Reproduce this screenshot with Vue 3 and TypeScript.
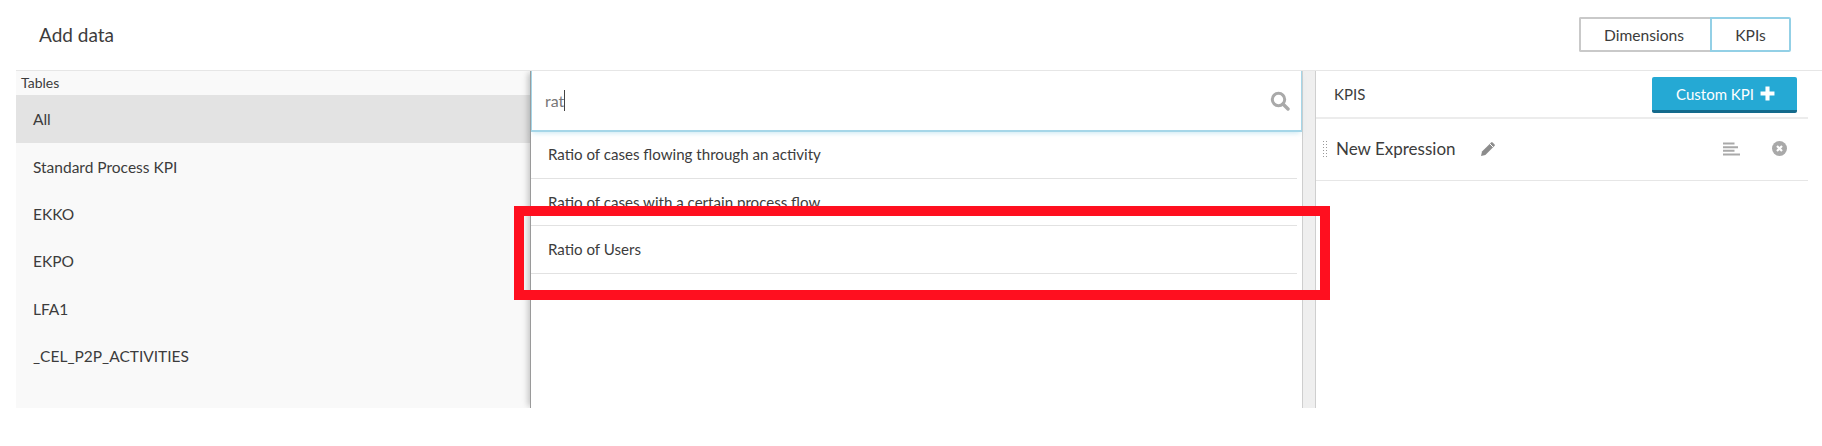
<script setup lang="ts">
const tables: string[] = ['All', 'Standard Process KPI', 'EKKO', 'EKPO', 'LFA1', '_CEL_P2P_ACTIVITIES']
const results: string[] = [
  'Ratio of cases flowing through an activity',
  'Ratio of cases with a certain process flow',
  'Ratio of Users',
]
</script>

<template>
  <div class="page">
    <header class="top">
      <h1 class="title">Add data</h1>
      <div class="toggle">
        <span class="tog tog-a">Dimensions</span>
        <span class="tog tog-b">KPIs</span>
      </div>
    </header>
    <main class="body">
      <section class="left">
        <div class="left-label">Tables</div>
        <div v-for="(t, i) in tables" :key="t" class="table-row" :class="{ active: i === 0 }">{{ t }}</div>
      </section>
      <section class="mid">
        <div class="search">
          <span class="query">rat</span><span class="caret"></span>
          <svg class="search-icon" viewBox="0 0 20 20" width="20" height="20">
            <circle cx="8.5" cy="8.5" r="6.2" fill="none" stroke="#a9a9a9" stroke-width="3" />
            <path d="M13 13l5 5" stroke="#a9a9a9" stroke-width="3.4" stroke-linecap="round" />
          </svg>
        </div>
        <div class="results">
          <div v-for="r in results" :key="r" class="result">{{ r }}</div>
        </div>
      </section>
      <div class="split"></div>
      <section class="right">
        <div class="right-head">
          <span class="kpis">KPIS</span>
          <button class="custom">Custom KPI
            <svg viewBox="0 0 14 14" width="15" height="15">
              <path d="M7 0.5v13M0.5 7h13" stroke="#fff" stroke-width="3.8" />
            </svg>
          </button>
        </div>
        <div class="expr">
          <span class="grip"></span>
          <span class="expr-name">New Expression</span>
          <svg class="pencil" viewBox="0 0 16 16" width="16" height="16">
            <path d="M1 15l1-4.4L11.2 1.4a1 1 0 0 1 1.4 0l2 2a1 1 0 0 1 0 1.4L5.4 14z" fill="#8c8c8c" />
            <path d="M10 3l3 3" stroke="#fff" stroke-width="1" />
          </svg>
          <span class="spacer"></span>
          <svg class="lines" viewBox="0 0 17 14" width="17" height="14">
            <path d="M0 1.5h11.5M0 5.2h15M0 8.8h11.5M0 12.5h17" stroke="#a9a9a9" stroke-width="2" />
          </svg>
          <svg class="close" viewBox="0 0 15 15" width="15" height="15">
            <circle cx="7.5" cy="7.5" r="7.5" fill="#a9a9a9" />
            <path d="M5 5l5 5M10 5l-5 5" stroke="#fff" stroke-width="2.2" />
          </svg>
        </div>
      </section>
    </main>
    <div class="marker"></div>
  </div>
</template>

<style>
html, body { margin: 0; background: #fff; }
</style>

<style scoped>
.page {
  position: relative;
  width: 1822px;
  height: 446px;
  overflow: hidden;
  background: #fff;
  font-family: "Lato", "Open Sans", sans-serif;
  color: #3c3c3c;
}
.top {
  height: 70px;
  box-sizing: border-box;
  padding: 17px 31px 0 39px;
  display: flex;
  justify-content: space-between;
  align-items: flex-start;
}
.title {
  margin: 0;
  font-size: 19px;
  font-weight: 400;
  line-height: 35px;
}
.toggle { display: flex; height: 35px; font-size: 15.6px; }
.tog {
  box-sizing: border-box;
  display: flex;
  align-items: center;
  justify-content: center;
}
.tog-a {
  width: 131px;
  padding-right: 3px;
  border: 2px solid #c9c9c9;
  border-right: 0;
  border-radius: 2px 0 0 2px;
}
.tog-b {
  width: 81px;
  border: 2px solid #93d0e6;
  border-radius: 0 2px 2px 0;
}
.body {
  margin-left: 16px;
  height: 338px;
  display: flex;
  overflow: hidden;
  border-top: 1px solid #e6e6e6;
  box-sizing: border-box;
}
.left {
  width: 514px;
  background: #f9f9f9;
  flex: none;
}
.left-label {
  height: 24px;
  line-height: 24px;
  padding-left: 5px;
  font-size: 14px;
}
.table-row {
  height: 47.2px;
  line-height: 49px;
  padding-left: 17px;
  font-size: 15.5px;
}
.table-row.active { background: #e3e3e3; height: 48px; line-height: 48px; }
.mid {
  width: 772px;
  flex: none;
  box-sizing: border-box;
  border-left: 1px solid #9a9a9a;
  box-shadow: -4px 0 6px -2px rgba(0, 0, 0, 0.22);
  position: relative;
  background: #fff;
}
.search {
  height: 61px;
  box-sizing: border-box;
  padding-left: 13px;
  display: flex;
  align-items: center;
  border-left: 1px solid #a5d6e8;
  border-right: 1px solid #a5d6e8;
  border-bottom: 2px solid #a5d6e8;
  box-shadow: 0 3px 5px -2px rgba(147, 208, 230, 0.5);
  font-size: 16px;
  color: #777;
}
.caret { width: 1px; height: 21px; background: #444; }
.search-icon { margin-left: auto; margin-right: 11px; }
.results { margin: -1px 5px 0 0; }
.result {
  height: 47.5px;
  box-sizing: border-box;
  line-height: 46px;
  padding-left: 17px;
  border-bottom: 1px solid #e2e2e2;
  font-size: 15.1px;
}
.split {
  width: 14px;
  flex: none;
  box-sizing: border-box;
  background: #efefef;
  border-left: 1px solid #cfcfcf;
  border-right: 1px solid #cfcfcf;
}
.right { width: 492px; flex: none; }
.right-head {
  height: 48px;
  box-sizing: border-box;
  display: flex;
  align-items: flex-start;
  justify-content: space-between;
  padding: 6px 11px 0 18px;
  border-bottom: 2px solid #ececec;
}
.kpis { font-size: 15px; line-height: 35px; }
.custom {
  width: 145px;
  height: 36px;
  margin: 0;
  padding: 0 0 0 2px;
  border: 0;
  border-bottom: 3px solid #146a8c;
  border-radius: 2px;
  background: #25a9d4;
  color: #fff;
  font-family: inherit;
  font-size: 15px;
  display: flex;
  align-items: center;
  justify-content: center;
  gap: 6px;
}
.expr {
  height: 62px;
  box-sizing: border-box;
  border-bottom: 1px solid #e6e6e6;
  display: flex;
  align-items: center;
  padding: 0 21px 2px 6px;
}
.grip {
  width: 6px;
  height: 17px;
  background-image: radial-gradient(circle, #999 0.9px, transparent 1px);
  background-size: 3px 3px;
}
.expr-name { font-size: 17px; margin-left: 8px; }
.pencil { margin-left: 24px; }
.spacer { flex: 1; }
.lines { margin-right: 32px; }
.marker {
  position: absolute;
  left: 514px;
  top: 206px;
  width: 816px;
  height: 94px;
  box-sizing: border-box;
  border: 10px solid #ff0f1f;
}
</style>
